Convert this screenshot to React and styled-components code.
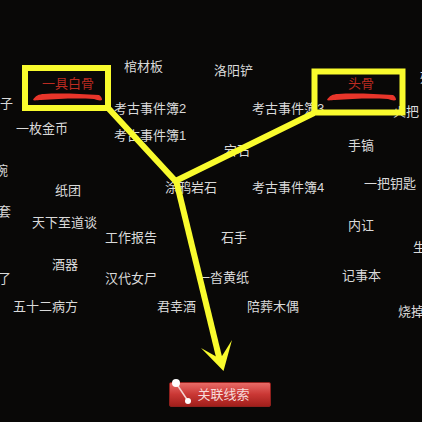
import React from 'react'
import styled, { createGlobalStyle } from 'styled-components'

const GlobalStyle = createGlobalStyle`
    body {
        margin: 0;
        background: #090807;
        font-family: "Liberation Sans", "Noto Sans CJK SC", sans-serif;
    }
`

const Page = styled.main`
    display: flex;
    flex-direction: column;
    min-height: 100vh;
    overflow: hidden;
    background: #090807;
`

const Board = styled.section`
    position: relative;
    flex: 1;
    min-height: 376px;
`

const Clue = styled.span`
    position: absolute;
    left: ${({ $x }) => $x}px;
    top: ${({ $y }) => $y}px;
    font-size: 13px;
    line-height: 20px;
    white-space: nowrap;
    color: ${({ $found }) => ($found ? '#bb2b21' : '#dadada')};
`

const Marks = styled.svg`
    position: absolute;
    left: 0;
    top: 0;
    pointer-events: none;
`

const Footer = styled.footer`
    display: flex;
    justify-content: center;
    padding: 0 0 15px 18px;
`

const LinkButton = styled.button`
    position: relative;
    width: 102px;
    height: 25px;
    padding: 0 0 0 7px;
    border: 1px solid #8f201d;
    border-radius: 2px;
    background: linear-gradient(#e86a66, #c93734 50%, #a11f1b);
    color: #f6dcda;
    font-family: inherit;
    font-size: 13px;
    line-height: 20px;
    cursor: pointer;
`

const LinkIcon = styled.svg`
    position: absolute;
    left: 0;
    top: -6px;
`

const clues = [
    { text: '棺材板', x: 124, y: 57 },
    { text: '洛阳铲', x: 214, y: 61 },
    { text: '残', x: 420, y: 68 },
    { text: '一具白骨', x: 42, y: 74, found: true },
    { text: '头骨', x: 348, y: 74, found: true },
    { text: '子', x: 0, y: 94 },
    { text: '考古事件簿2', x: 114, y: 99 },
    { text: '考古事件簿3', x: 252, y: 99 },
    { text: '火把', x: 393, y: 102 },
    { text: '一枚金币', x: 16, y: 119 },
    { text: '考古事件簿1', x: 114, y: 126 },
    { text: '宕石', x: 224, y: 141 },
    { text: '手镐', x: 348, y: 136 },
    { text: '碗', x: -5, y: 161 },
    { text: '涂鸦岩石', x: 165, y: 178 },
    { text: '考古事件簿4', x: 252, y: 178 },
    { text: '一把钥匙', x: 364, y: 174 },
    { text: '纸团', x: 55, y: 181 },
    { text: '套', x: -2, y: 202 },
    { text: '天下至道谈', x: 32, y: 213 },
    { text: '内讧', x: 348, y: 216 },
    { text: '工作报告', x: 105, y: 228 },
    { text: '石手', x: 221, y: 228 },
    { text: '生', x: 413, y: 238 },
    { text: '酒器', x: 52, y: 255 },
    { text: '了', x: -2, y: 269 },
    { text: '汉代女尸', x: 105, y: 269 },
    { text: '一沓黄纸', x: 197, y: 268 },
    { text: '记事本', x: 342, y: 266 },
    { text: '五十二病方', x: 13, y: 297 },
    { text: '君幸酒', x: 157, y: 297 },
    { text: '陪葬木偶', x: 247, y: 297 },
    { text: '烧掉', x: 398, y: 302 },
]

const BrushStroke = ({ x, y }) => (
    <path
        transform={`translate(${x} ${y})`}
        d="M0 6C2 2 6 0 11 0C28 -1 48 0 66 1C68 2 69 4 69 6C67 7 64 6 61 5C42 4 24 5 8 6C5 6 1 7 0 6Z"
        fill="#e8352a"
    />
)

const App = () => {
    return (
        <Page>
            <GlobalStyle />
            <Board>
                {clues.map(({ text, x, y, found }) => (
                    <Clue key={text} $x={x} $y={y} $found={found}>{text}</Clue>
                ))}
                <Marks width="422" height="376" viewBox="0 0 422 376" aria-hidden="true">
                    <BrushStroke x={33} y={94} />
                    <BrushStroke x={327} y={94} />
                    <g fill="none" stroke="#f9fb2d" strokeWidth="6">
                        <rect x="25" y="68" width="83" height="40" />
                        <rect x="314.5" y="71.5" width="88" height="41" />
                        <path d="M109 109L175.5 181L314 113" />
                        <path d="M176 180L219.5 359" />
                    </g>
                    <path d="M223.500 371L201 348L217 357L222 356L232 340Z" fill="#f9fb2d" />
                </Marks>
            </Board>
            <Footer>
                <LinkButton type="button">
                    <LinkIcon width="26" height="28" viewBox="0 0 26 28" aria-hidden="true">
                        <path d="M6 6L18 24" stroke="#f2d5d3" strokeWidth="1.500" />
                        <circle cx="6" cy="6" r="4" fill="#fff" />
                        <circle cx="18" cy="24" r="3" fill="#fff" />
                    </LinkIcon>
                    关联线索
                </LinkButton>
            </Footer>
        </Page>
    )
}

export default App
